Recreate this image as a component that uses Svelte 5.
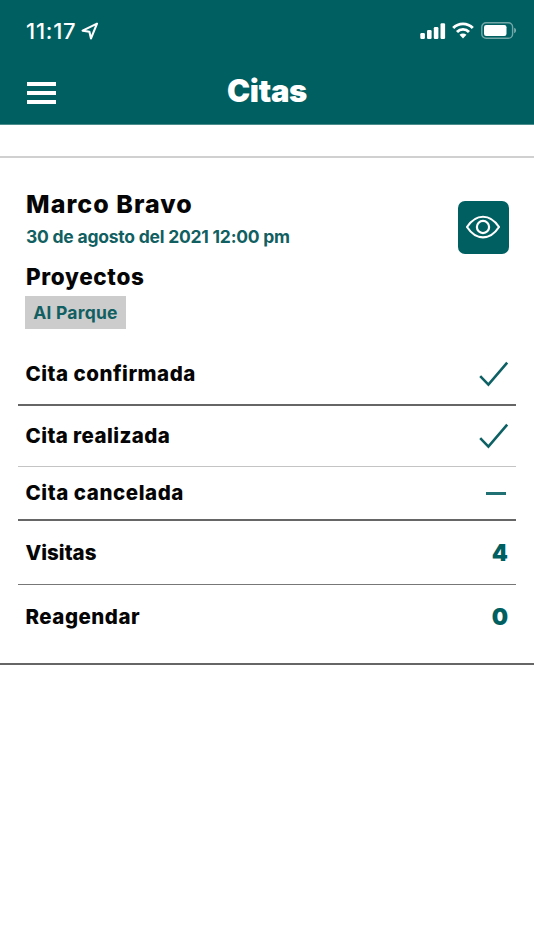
<script>
  const rows = [
    { label: 'Cita confirmada', kind: 'check', size: 'confirmed', spacing: 0.5 },
    { label: 'Cita realizada', kind: 'check', size: 'done', spacing: 0.42 },
    { label: 'Cita cancelada', kind: 'dash', size: 'cancelled', spacing: 0.57 },
    { label: 'Visitas', kind: 'count', value: 4, size: 'visits', spacing: 0 },
    { label: 'Reagendar', kind: 'count', value: 0, size: 'reschedule', spacing: 0.5 },
  ];
</script>

<div class="screen">
  <header>
    <div class="status">
      <div class="clock">
        <span class="time">11:17</span>
        <svg class="location" width="18" height="18" viewBox="0 0 18 18" fill="none" stroke="#fff" stroke-width="2.1" stroke-linejoin="round">
          <path d="M16 1.6 L1.6 8.6 L8.4 9.7 L10 16.4 Z" />
        </svg>
      </div>
      <div class="indicators">
        <svg width="26" height="16" viewBox="0 0 26 16" fill="#fff">
          <rect x="0.3" y="10" width="4.6" height="6" rx="1.2" />
          <rect x="7" y="7" width="4.6" height="9" rx="1.2" />
          <rect x="13.8" y="4" width="4.6" height="12" rx="1.2" />
          <rect x="20.5" y="0.3" width="4.6" height="15.7" rx="1.2" />
        </svg>
        <svg class="wifi" width="22" height="17" viewBox="0 0 22 17" fill="none" stroke="#fff" stroke-width="2.9">
          <path d="M1.2 6.1 C6.6 0.5 15.4 0.5 20.8 6.1" />
          <path d="M5 9.9 C8.3 6.5 13.7 6.5 17 9.9" />
          <path d="M7.5 12.8 C9.5 11 12.5 11 14.5 12.8 L11 16.4 Z" fill="#fff" stroke="none" />
        </svg>
        <svg class="battery" width="36" height="17" viewBox="0 0 36 17">
          <rect x="0.8" y="0.8" width="30.8" height="15.4" rx="4.3" fill="none" stroke="#fff" stroke-opacity="0.45" stroke-width="1.4" />
          <rect x="3" y="3" width="22.5" height="11" rx="2.2" fill="#fff" />
          <path d="M33.2 5.8 C35.6 6.6 35.6 10.4 33.2 11.2 Z" fill="#fff" fill-opacity="0.5" />
        </svg>
      </div>
    </div>
    <div class="bar">
      <button class="menu" aria-label="Menú"><i></i><i></i><i></i></button>
      <h1>Citas</h1>
    </div>
  </header>

  <main>
    <section class="person">
      <div class="info">
        <h2>Marco Bravo</h2>
        <p class="date">30 de agosto del 2021 12:00 pm</p>
        <h3>Proyectos</h3>
        <span class="tag">Al Parque</span>
      </div>
      <button class="view" aria-label="Ver">
        <svg width="36" height="26" viewBox="0 0 36 26" fill="none" stroke="#fff" stroke-width="2.2">
          <path d="M2 13 C11 -0.7 25 -0.7 34 13 C25 26.7 11 26.7 2 13 Z" stroke-linejoin="round" />
          <circle cx="18" cy="13" r="6.1" />
        </svg>
      </button>
    </section>

    <ul>
      {#each rows as row}
        <li class={row.size}>
          <span class="label" style="letter-spacing: {row.spacing}px">{row.label}</span>
          {#if row.kind === 'check'}
            <svg class="check" width="30" height="26" viewBox="0 0 30 26" fill="none" stroke="#0d6164" stroke-width="2.6">
              <path d="M1.2 15.2 L9.4 23.6 L28.2 1.6" />
            </svg>
          {:else if row.kind === 'dash'}
            <span class="dash"></span>
          {:else}
            <span class="count">{row.value}</span>
          {/if}
        </li>
      {/each}
    </ul>
  </main>
</div>

<style>
  :global(body) { background: #fff; }
  .screen {
    width: 534px;
    height: 950px;
    overflow: hidden;
    background: #fff;
    color: #050505;
    font-family: Inter, "Liberation Sans", sans-serif;
  }
  header {
    box-sizing: border-box;
    height: 125px;
    background: #005f61;
    border-bottom: 1px solid #4b8c8d;
    color: #fff;
  }
  .status {
    display: flex;
    align-items: center;
    justify-content: space-between;
    height: 61px;
    padding: 0 17px 0 26px;
  }
  .clock, .indicators { display: flex; align-items: center; }
  .time { font-size: 22px; font-weight: 500; line-height: 26px; letter-spacing: 0.75px; }
  .location { margin-left: 5px; }
  .wifi { margin-left: 6px; }
  .battery { margin-left: 7px; }
  .bar {
    display: grid;
    grid-template-columns: 29px 1fr 29px;
    align-items: center;
    height: 62px;
    padding: 0 27px;
  }
  button { border: 0; padding: 0; }
  .menu { display: flex; flex-direction: column; gap: 4.6px; background: none; margin-top: 2px; }
  .menu i { width: 29px; height: 4.3px; background: #fff; }
  h1, h2, h3, p, ul { margin: 0; padding: 0; }
  h1 { margin-top: -2px; font-size: 31px; line-height: 38px; font-weight: 900; text-align: center; letter-spacing: -0.3px; }
  main {
    box-sizing: border-box;
    margin-top: 31px;
    height: 509px;
    border-top: 2px solid #d0d0d0;
    border-bottom: 2px solid #666;
  }
  .person {
    display: flex;
    justify-content: space-between;
    height: 186px;
    padding: 0 25px;
  }
  .info { padding-top: 30px; }
  h2, h3, .date { padding-left: 1px; }
  h2 { font-size: 25px; line-height: 32px; font-weight: 800; letter-spacing: 1.05px; }
  .date { margin-top: 4px; font-size: 17.5px; line-height: 26px; font-weight: 700; letter-spacing: -0.23px; color: #125f62; }
  h3 { margin-top: 13px; font-size: 22.5px; line-height: 28px; font-weight: 800; letter-spacing: 0.65px; }
  .tag {
    display: flex;
    align-items: center;
    justify-content: center;
    width: 101px;
    height: 33px;
    margin-top: 5px;
    background: #ccc;
    color: #125f62;
    font-size: 17.5px;
    font-weight: 700;
    letter-spacing: 0.25px;
    white-space: nowrap;
  }
  .view {
    display: flex;
    align-items: center;
    justify-content: center;
    width: 51px;
    height: 53px;
    margin-top: 43px;
    padding-right: 1px;
    padding-bottom: 1px;
    border-radius: 7px;
    background: #005f61;
  }
  ul { list-style: none; margin: 0 18px; }
  li {
    box-sizing: border-box;
    display: flex;
    align-items: center;
    justify-content: space-between;
    padding: 0 8px 0 7.5px;
    border-bottom: 1px solid transparent;
  }
  .label { font-size: 20.5px; line-height: 26px; font-weight: 800; white-space: nowrap; }
  .confirmed { height: 62px; border-bottom: 2px solid #666; }
  .done { height: 61px; border-color: #c4c4c4; }
  .cancelled { height: 54px; border-bottom: 2px solid #666; }
  .visits { height: 64px; border-color: #777; }
  .reschedule { height: 65px; }
  .check { margin-right: -1px; }
  .dash { width: 20px; height: 3px; margin-right: 2px; background: #1f7174; }
  .count { font-size: 23px; line-height: 28px; font-weight: 900; color: #005f61; }
</style>
